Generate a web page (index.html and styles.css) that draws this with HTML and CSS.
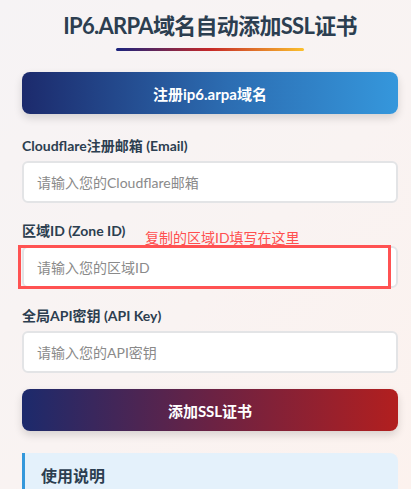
FILE: index.html
```html
<!DOCTYPE html>
<html lang="zh-CN">
<head>
<meta charset="utf-8">
<title>IP6.ARPA域名自动添加SSL证书</title>
<link rel="stylesheet" href="styles.css">
</head>
<body>
<div class="container">
  <h1 class="title">IP6.ARPA域名自动添加SSL证书</h1>
  <div class="title-line"></div>
  <button class="btn btn-register" type="button">注册ip6.arpa域名</button>

  <div class="form-group">
    <label class="label" for="email">Cloudflare注册邮箱 (Email)</label>
    <input class="input" id="email" type="text" placeholder="请输入您的Cloudflare邮箱">
  </div>

  <div class="form-group annotated">
    <label class="label" for="zone">区域ID (Zone ID)</label>
    <span class="note">复制的区域ID填写在这里</span>
    <div class="input-wrap">
      <input class="input" id="zone" type="text" placeholder="请输入您的区域ID">
      <div class="highlight"></div>
    </div>
  </div>

  <div class="form-group">
    <label class="label" for="key">全局API密钥 (API Key)</label>
    <input class="input" id="key" type="text" placeholder="请输入您的API密钥">
  </div>

  <button class="btn btn-submit" type="button">添加SSL证书</button>

  <div class="info">
    <h3 class="info-title">使用说明</h3>
  </div>
</div>
</body>
</html>
```

FILE: styles.css
```css
* { box-sizing: border-box; }

html, body {
  margin: 0;
  height: 100%;
}

body {
  font-family: Lato, "Noto Sans CJK SC", sans-serif;
  background: linear-gradient(135deg, #f6f3f5 0%, #f9f3f2 55%, #fcf2ee 100%);
  color: #2c3e50;
  overflow: hidden;
}

.container {
  padding: 11px 13px 0 22px;
  display: flex;
  flex-direction: column;
}

.title {
  margin: 0;
  font-size: 22px;
  line-height: 30px;
  font-weight: 700;
  letter-spacing: -0.7px;
  text-align: center;
  color: #2c3e50;
}

.title-line {
  align-self: center;
  width: 188px;
  height: 3px;
  margin-top: 7px;
  border-radius: 2px;
  background: linear-gradient(90deg, #1a237e 0%, #c62828 50%, #fbc02d 100%);
}

.btn {
  height: 42px;
  border: none;
  border-radius: 8px;
  color: #fff;
  font-family: inherit;
  font-size: 15px;
  font-weight: 700;
  box-shadow: 0 4px 8px rgba(0, 0, 0, 0.14);
  cursor: pointer;
}

.btn-register {
  margin-top: 21px;
  background: linear-gradient(90deg, #1c2a6c 0%, #2c6db2 55%, #3597dc 100%);
}

.btn-submit {
  margin-top: -2px;
  background: linear-gradient(90deg, #1c2a6c 0%, #6a2244 50%, #b21f1f 100%);
}

.form-group {
  display: flex;
  flex-direction: column;
  gap: 5px;
  margin-bottom: 18px;
}

.btn-register + .form-group { margin-top: 22px; }

.label {
  font-size: 14px;
  line-height: 20px;
  font-weight: 700;
  color: #2c3e50;
}

.input {
  height: 42px;
  width: 100%;
  padding: 0 13px;
  border: 2px solid #e3e4e6;
  border-radius: 6px;
  background: #fff;
  font-family: inherit;
  font-size: 14px;
  color: #333;
  outline: none;
}

.input::placeholder { color: #8a8a8a; }

.annotated { position: relative; }

.note {
  position: absolute;
  left: 123px;
  top: 8px;
  font-size: 14px;
  line-height: 18px;
  color: #ff4f4f;
}

.input-wrap { position: relative; }

.highlight {
  position: absolute;
  left: -4px;
  right: 7px;
  top: -1px;
  bottom: -1px;
  border: 3px solid #ff5252;
  pointer-events: none;
}

.info {
  margin-top: 22px;
  padding: 13px 16px 20px;
  background: #e4f1fb;
  border-left: 3px solid #3498db;
  border-radius: 0 8px 8px 0;
}

.info-title {
  margin: 0;
  font-size: 16px;
  line-height: 20px;
  font-weight: 700;
  color: #2c3e50;
}
```
